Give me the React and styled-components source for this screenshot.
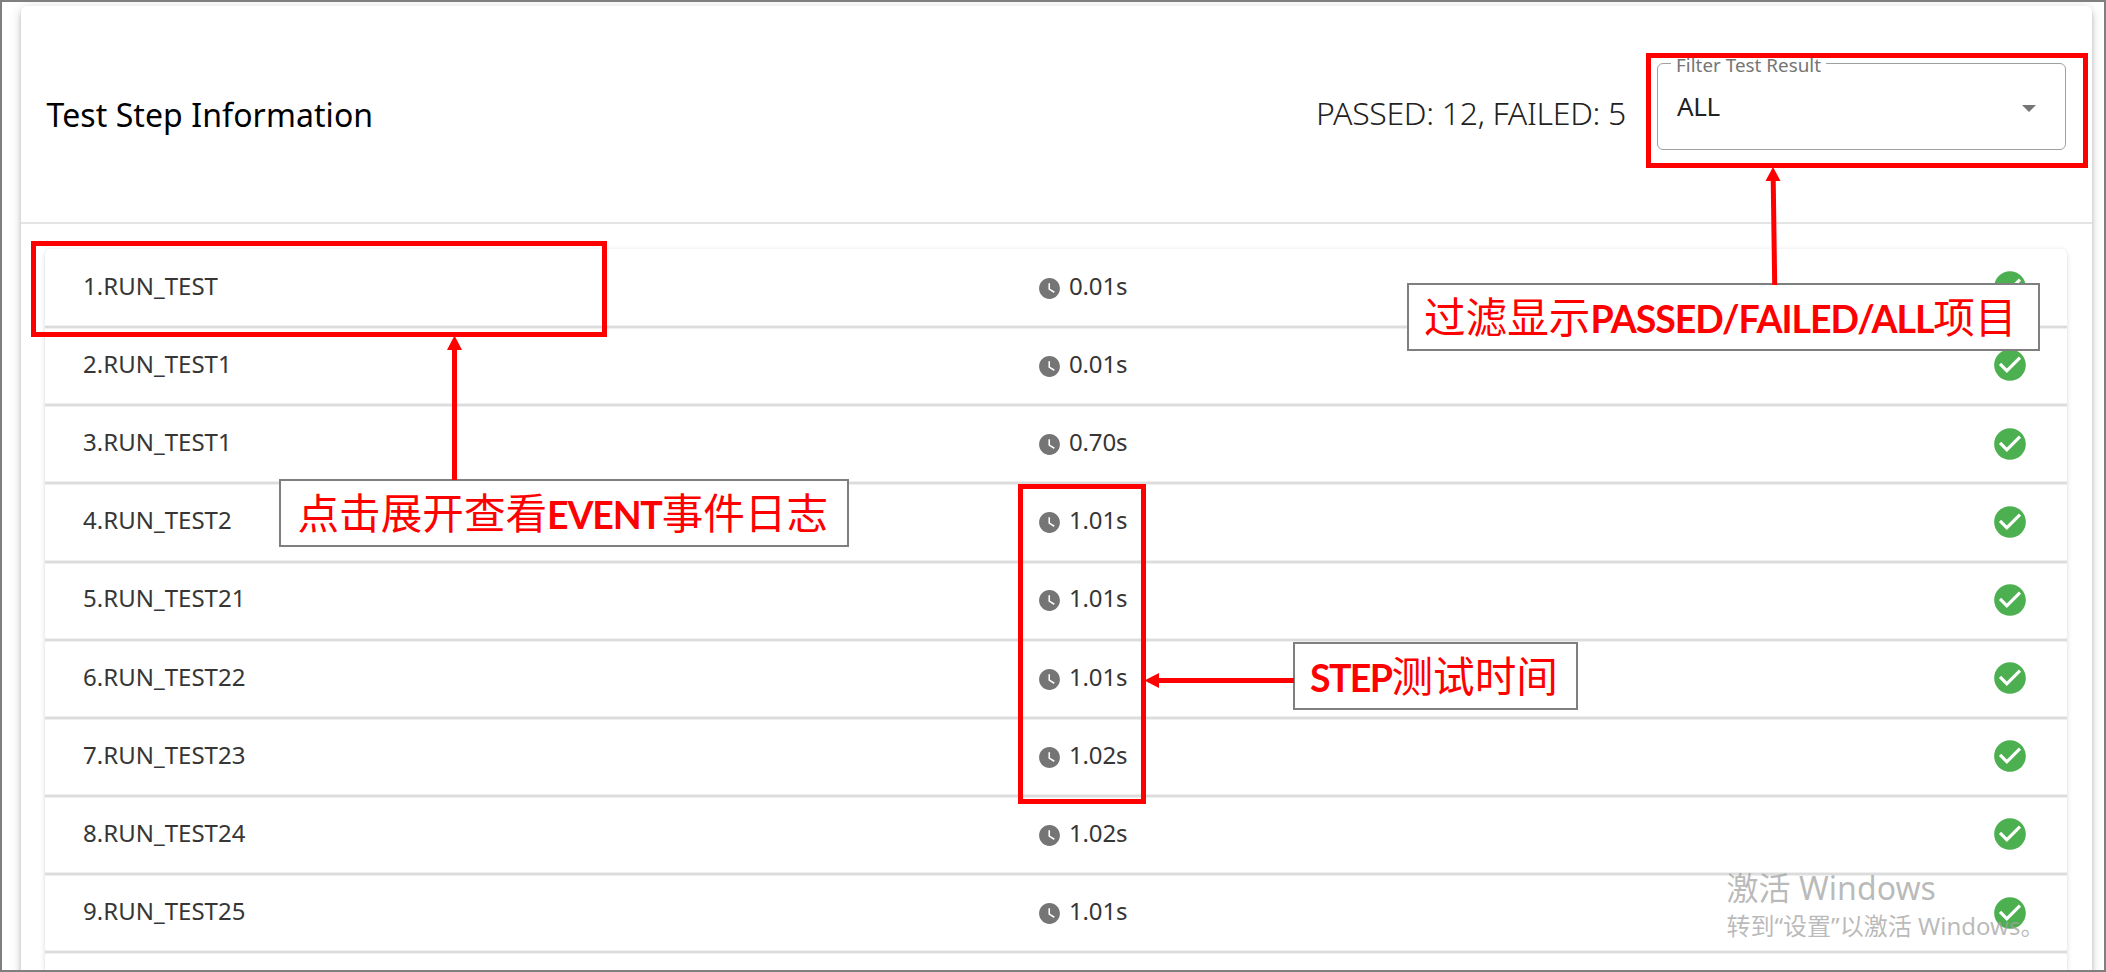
import React from "react";
import styled, { createGlobalStyle } from "styled-components";
import { MdCheckCircle, MdWatchLater } from "react-icons/md";

const GlobalStyle = createGlobalStyle`
  * { box-sizing: border-box; }
  body {
    margin: 0;
    background: #fff;
    font-family: "Noto Sans", "Open Sans", "Noto Sans CJK SC", sans-serif;
  }
`;

const Frame = styled.div`
  position: relative;
  width: 2106px;
  height: 972px;
  overflow: hidden;
  border: 2px solid #7f7f7f;
  padding: 4px 12px 0 18.5px;
  background: #fff;
`;

const Card = styled.section`
  display: flex;
  flex-direction: column;
  min-height: 1010px;
  border-radius: 6px;
  background: #fff;
  box-shadow: 0 3px 5px -1px rgba(0, 0, 0, 0.2), 0 5px 7px rgba(0, 0, 0, 0.1),
    0 1px 13px rgba(0, 0, 0, 0.12);
`;

const Header = styled.header`
  display: flex;
  align-items: center;
  justify-content: space-between;
  height: 218px;
  padding: 0 26px;
  border-bottom: 2px solid #e4e4e4;
`;

const Title = styled.h1`
  margin: 0;
  font-size: 32px;
  font-weight: 400;
  letter-spacing: 0.08px;
  color: #000;
`;

const Controls = styled.div`
  display: flex;
  align-items: center;
  gap: 31px;
  padding-bottom: 16px;
`;

const Summary = styled.p`
  margin: 0;
  padding-top: 13px;
  font-size: 32px;
  font-weight: 300;
  letter-spacing: -0.32px;
  white-space: nowrap;
  color: #222;
`;

const Select = styled.div`
  position: relative;
  display: flex;
  align-items: center;
  justify-content: space-between;
  width: 409px;
  height: 87px;
  padding: 0 29px 0 19px;
  border: 1.5px solid #a0a0a0;
  border-radius: 6px;
`;

const SelectLabel = styled.span`
  position: absolute;
  top: -13px;
  left: 13px;
  padding: 0 5px;
  background: #fff;
  font-size: 18.8px;
  letter-spacing: 0.04px;
  line-height: 28px;
  color: #757575;
`;

const SelectValue = styled.span`
  padding-bottom: 1px;
  font-size: 26px;
  letter-spacing: -0.4px;
  color: #222;
`;

const Caret = styled.span`
  margin-top: 4px;
  border: 7.5px solid transparent;
  border-top-color: #757575;
  border-bottom-width: 0;
`;

const ListArea = styled.div`
  padding: 25px 25px 0 24.5px;
`;

const List = styled.ul`
  display: flex;
  flex-direction: column;
  list-style: none;
  margin: 0;
  padding: 1px 0 0;
  border-radius: 6px;
  background: #fff;
  box-shadow: 0 3px 2px -1px rgba(0, 0, 0, 0.14), 0 1px 5px rgba(0, 0, 0, 0.15);
`;

const Row = styled.li`
  display: grid;
  grid-template-columns: 954px 1fr auto;
  align-items: center;
  flex: none;
  height: 78.16px;
  padding: 0 38px 1.5px 38px;
  border-bottom: 2px solid #dcdcdc;
  box-shadow: inset 0 -1px #efefef, 0 1px #efefef;
`;

const StepName = styled.span`
  padding-bottom: 4px;
  font-size: 24px;
  letter-spacing: 0.02px;
  color: #363636;
`;

const Duration = styled.span`
  display: flex;
  align-items: center;
  gap: 7px;
  padding-bottom: 4px;
  font-size: 24px;
  letter-spacing: -0.15px;
  color: #363636;

  svg {
    margin-top: 6px;
    color: #757575;
  }
`;

const Passed = styled(MdCheckCircle)`
  display: block;
  color: #4caf50;
`;

const Outline = styled.div`
  position: absolute;
  left: ${(p) => p.$x - 2}px;
  top: ${(p) => p.$y - 2}px;
  width: ${(p) => p.$w}px;
  height: ${(p) => p.$h}px;
  border: 5px solid #f00;
`;

const Arrows = styled.svg`
  position: absolute;
  left: -2px;
  top: -2px;
`;

const Note = styled.div`
  position: absolute;
  left: ${(p) => p.$x - 2}px;
  top: ${(p) => p.$y - 2}px;
  width: ${(p) => p.$w}px;
  height: 68px;
  padding-left: ${(p) => p.$pad}px;
  border: 2px solid #7f7f7f;
  background: #fff;
  font: 400 41.6px/60px "Noto Sans CJK SC", sans-serif;
  white-space: nowrap;
  color: #f00;
`;

const Latin = styled.b`
  font-family: Lato, sans-serif;
  font-size: 37.5px;
  font-weight: 700;
  letter-spacing: ${(p) => p.$track}px;
`;

const Watermark = styled.div`
  position: absolute;
  left: 1724.5px;
  top: 865px;
  white-space: nowrap;
  color: rgba(160, 160, 160, 0.72);
`;

const WatermarkTitle = styled.div`
  font-size: 32px;
  letter-spacing: 0.05px;
  line-height: 42px;
`;

const WatermarkText = styled.div`
  font-size: 24px;
  line-height: 33px;
`;

const steps = [
  ["1.RUN_TEST", "0.01s"],
  ["2.RUN_TEST1", "0.01s"],
  ["3.RUN_TEST1", "0.70s"],
  ["4.RUN_TEST2", "1.01s"],
  ["5.RUN_TEST21", "1.01s"],
  ["6.RUN_TEST22", "1.01s"],
  ["7.RUN_TEST23", "1.02s"],
  ["8.RUN_TEST24", "1.02s"],
  ["9.RUN_TEST25", "1.01s"],
];

export default function App() {
  return (
    <Frame>
      <GlobalStyle />
      <Card>
        <Header>
          <Title>Test Step Information</Title>
          <Controls>
            <Summary>PASSED: 12, FAILED: 5</Summary>
            <Select>
              <SelectLabel>Filter Test Result</SelectLabel>
              <SelectValue>ALL</SelectValue>
              <Caret />
            </Select>
          </Controls>
        </Header>
        <ListArea>
          <List>
            {steps.map(([name, time]) => (
              <Row key={name}>
                <StepName>{name}</StepName>
                <Duration>
                  <MdWatchLater size={25} />
                  {time}
                </Duration>
                <Passed size={38} />
              </Row>
            ))}
            <Row />
          </List>
        </ListArea>
      </Card>

      <Watermark>
        <WatermarkTitle>激活 Windows</WatermarkTitle>
        <WatermarkText>转到“设置”以激活 Windows。</WatermarkText>
      </Watermark>

      <Outline $x={31} $y={241} $w={576} $h={96} />
      <Outline $x={1646} $y={53} $w={442} $h={115} />
      <Outline $x={1018} $y={484} $w={128} $h={320} />

      <Note $x={279} $y={479} $w={570} $pad={16.5}>
        点击展开查看<Latin $track={-1.2}>EVENT</Latin>事件日志
      </Note>
      <Note $x={1293} $y={642} $w={285} $pad={15}>
        <Latin $track={-1.6}>STEP</Latin>测试时间
      </Note>
      <Note $x={1407} $y={283} $w={633} $pad={15}>
        过滤显示<Latin $track={-1.05}>PASSED/FAILED/ALL</Latin>项目
      </Note>

      <Arrows width="2106" height="972" viewBox="0 0 2106 972" fill="#f00" stroke="none">
        <path d="M454.5 335.5L462 350H447Z" />
        <path d="M452 348h5v132h-5z" />
        <path d="M1773 167L1780.5 181H1765.5Z" />
        <path d="M1770.7 179h5L1777.2 285h-5z" />
        <path d="M1144.5 680.5L1159 673V688Z" />
        <path d="M1157 678h137v5h-137z" />
      </Arrows>
    </Frame>
  );
}
